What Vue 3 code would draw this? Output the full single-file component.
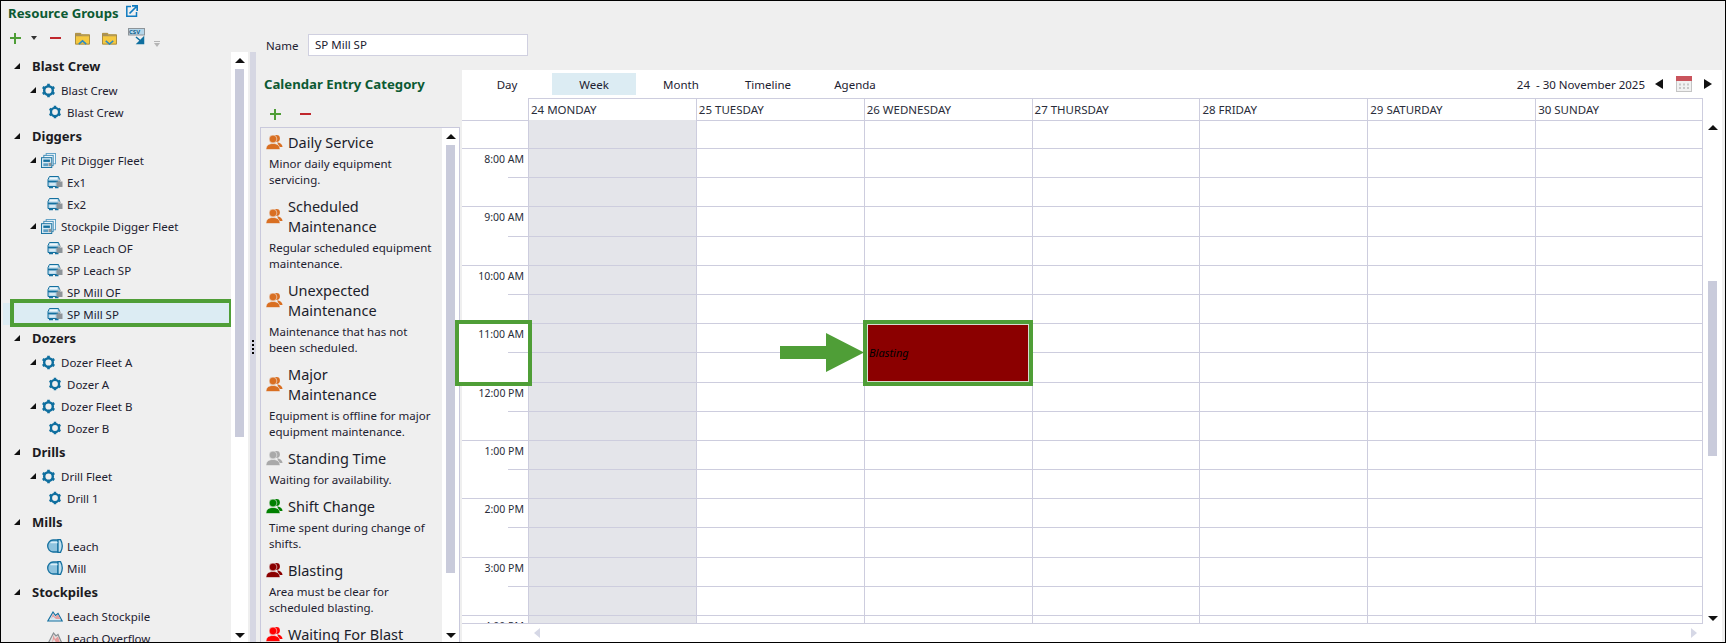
<script setup>
const tree = [
  { t: 'h', n: 'Blast Crew' },
  { t: 'g', n: 'Blast Crew', i: 'gear' },
  { t: 'i', n: 'Blast Crew', i: 'gear' },
  { t: 'h', n: 'Diggers' },
  { t: 'g', n: 'Pit Digger Fleet', i: 'fleet' },
  { t: 'i', n: 'Ex1', i: 'truck' },
  { t: 'i', n: 'Ex2', i: 'truck' },
  { t: 'g', n: 'Stockpile Digger Fleet', i: 'fleet' },
  { t: 'i', n: 'SP Leach OF', i: 'truck' },
  { t: 'i', n: 'SP Leach SP', i: 'truck' },
  { t: 'i', n: 'SP Mill OF', i: 'truck' },
  { t: 'i', n: 'SP Mill SP', i: 'truck', sel: true },
  { t: 'h', n: 'Dozers' },
  { t: 'g', n: 'Dozer Fleet A', i: 'gear' },
  { t: 'i', n: 'Dozer A', i: 'gear' },
  { t: 'g', n: 'Dozer Fleet B', i: 'gear' },
  { t: 'i', n: 'Dozer B', i: 'gear' },
  { t: 'h', n: 'Drills' },
  { t: 'g', n: 'Drill Fleet', i: 'gear' },
  { t: 'i', n: 'Drill 1', i: 'gear' },
  { t: 'h', n: 'Mills' },
  { t: 'i', n: 'Leach', i: 'mill' },
  { t: 'i', n: 'Mill', i: 'mill' },
  { t: 'h', n: 'Stockpiles' },
  { t: 'i', n: 'Leach Stockpile', i: 'pile' },
  { t: 'i', n: 'Leach Overflow', i: 'pile2' }
]

const categories = [
  { c: '#d96f22', title: ['Daily Service'], desc: ['Minor daily equipment', 'servicing.'] },
  { c: '#d96f22', title: ['Scheduled', 'Maintenance'], desc: ['Regular scheduled equipment', 'maintenance.'] },
  { c: '#d96f22', title: ['Unexpected', 'Maintenance'], desc: ['Maintenance that has not', 'been scheduled.'] },
  { c: '#d96f22', title: ['Major', 'Maintenance'], desc: ['Equipment is offline for major', 'equipment maintenance.'] },
  { c: '#a9a9a9', title: ['Standing Time'], desc: ['Waiting for availability.'] },
  { c: '#008000', title: ['Shift Change'], desc: ['Time spent during change of', 'shifts.'] },
  { c: '#8b0000', title: ['Blasting'], desc: ['Area must be clear for', 'scheduled blasting.'] },
  { c: '#ff0000', title: ['Waiting For Blast'], desc: [] }
]

const tabs = ['Day', 'Week', 'Month', 'Timeline', 'Agenda']
const days = ['24 MONDAY', '25 TUESDAY', '26 WEDNESDAY', '27 THURSDAY', '28 FRIDAY', '29 SATURDAY', '30 SUNDAY']
const hours = ['8:00 AM', '9:00 AM', '10:00 AM', '11:00 AM', '12:00 PM', '1:00 PM', '2:00 PM', '3:00 PM']
const dateRange = '24  - 30 November 2025'

const rows = [{ kind: 'first' }]
hours.forEach((h) => {
  rows.push({ kind: 'half', label: h })
  rows.push({ kind: 'hour' })
})
rows.push({ kind: 'last', label: '4:00 PM' })
</script>

<template>
  <div class="screen">
    <svg class="defs" aria-hidden="true">
      <symbol id="gear" viewBox="0 0 16 16">
        <g stroke="#0f6f9f" fill="none">
          <circle cx="8" cy="8" r="4.6" stroke-width="2.6" />
          <path stroke-width="2.8" d="M8 .8v2.6M8 12.6v2.6M1.8 4.4l2.2 1.3M12 10.3l2.2 1.3M1.8 11.6l2.2-1.3M12 5.7l2.2-1.3" />
        </g>
      </symbol>
      <symbol id="truck" viewBox="0 0 16 14">
        <path d="M1 4.500 2.500 1.500h9l1 3v7H1z" fill="#a8cfe4" stroke="#14709f" />
        <rect x="2.500" y="2.500" width="8" height="2" fill="#eef7fb" />
        <path d="M1 6.500h11.500" stroke="#14709f" stroke-width="1.600" />
        <rect x="2.500" y="8" width="6" height="2.500" fill="#d4e8f3" />
        <rect x="9.500" y="6.500" width="6" height="5.500" fill="#8d9499" />
        <rect x="11" y="4.500" width="3" height="2" fill="#b5babd" />
        <path d="M2 12.500h4M8 12.500h3.500" stroke="#14709f" stroke-width="1.600" />
      </symbol>
      <symbol id="fleet" viewBox="0 0 16 16">
        <rect x="5.500" y=".5" width="10" height="11" fill="#eef6fb" stroke="#5d9fc4" />
        <rect x="3" y="2.500" width="10" height="11" fill="#eef6fb" stroke="#3d8ab6" />
        <rect x=".5" y="5" width="11" height="10.500" fill="#d7e9f3" stroke="#14709f" />
        <rect x="2.500" y="7" width="7" height="2.500" fill="#14709f" />
        <rect x="2.500" y="11" width="5" height="3" fill="#5d9fc4" />
        <rect x="8" y="10.500" width="3" height="3.500" fill="#8d9499" />
      </symbol>
      <symbol id="mill" viewBox="0 0 16 14">
        <path d="M11 1H6C3 1 .7 4 .7 7s2.300 6 5.300 6h5z" fill="#8fc3de" stroke="#14709f" stroke-width="1.300" />
        <path d="M11 .7h2.500c1.200 2 1.800 4 1.800 6.300s-.6 4.300-1.800 6.300H11z" fill="#c4e1ef" stroke="#14709f" stroke-width="1.300" />
        <path d="M3.500 3.500h7" stroke="#d9eef8" stroke-width="1.500" />
      </symbol>
      <symbol id="pile" viewBox="0 0 16 12">
        <path d="M.8 11 6 2l2.500 3.500L11 3.500 15.200 11z" fill="#d6e9f3" stroke="#14709f" stroke-width="1.200" />
        <path d="M6 3.500 8 7l3-2.500 2.500 4.500H9L6 6.500 4 9z" fill="#e3a0a0" />
      </symbol>
      <symbol id="pile2" viewBox="0 0 16 14">
        <path d="M.8 13 6.500 2 9 5l2-1.500L15.200 13z" fill="#e2e2e2" stroke="#8a8f93" stroke-width="1.200" />
        <path d="M6.500 4 8 8l3-2.500 2 6H9L7 8 5 12z" fill="#e59a9a" />
      </symbol>
      <symbol id="person" viewBox="0 0 17 16">
        <circle cx="10.500" cy="4.500" r="3.400" />
        <path d="M11 8.500c3 0 5.500 1.800 5.500 4.500H13c-.4-2-1-3.300-2-4.500z" />
        <circle cx="7" cy="5" r="3.900" stroke="#efefef" stroke-width=".6" />
        <path d="M0 15.500c0-3.800 2.500-6 7-6s7 2.200 7 6z" stroke="#efefef" stroke-width=".6" />
      </symbol>
      <symbol id="folder" viewBox="0 0 16 16">
        <path d="M.5 2.500h5.500l1.500 1.500h8V14H.5z" fill="#f6c93f" stroke="#a5873a" />
        <path d="M1 3h4.800l1.500 1.500H15v1H1z" fill="#a8915a" />
      </symbol>
    </svg>

    <aside class="left">
      <header class="title-row">
        <h1 class="section-title">Resource Groups</h1>
        <svg class="ext" viewBox="0 0 12 12" aria-hidden="true">
          <path d="M5 1.500H.8v9.700h9.700V7" fill="none" stroke="#0e7ac0" stroke-width="1.500" />
          <path d="M3.500 8.500 10 2M6 .8h5.200V6" fill="none" stroke="#0e7ac0" stroke-width="1.700" />
        </svg>
      </header>
      <div class="toolbar">
        <span class="plus tb-plus"></span>
        <svg class="tb-drop" viewBox="0 0 6 4" aria-hidden="true"><path d="M0 0h6L3 4z" fill="#333" /></svg>
        <span class="minus tb-minus"></span>
        <span class="tb-folder">
          <svg viewBox="0 0 16 16" aria-hidden="true"><use href="#folder" /><path d="M4 14l4-3.500 4 3.500" fill="none" stroke="#2b8ac4" stroke-width="1.600" /></svg>
        </span>
        <span class="tb-folder second">
          <svg viewBox="0 0 16 16" aria-hidden="true"><use href="#folder" /><path d="M4 10.500l4 3.500 4-3.500" fill="none" stroke="#2b8ac4" stroke-width="1.600" /></svg>
        </span>
        <svg class="tb-csv" viewBox="0 0 17 17" aria-hidden="true">
          <rect x=".5" y=".5" width="16" height="6.500" fill="#b5d6ea" stroke="#8d9499" />
          <path d="M8 9l6 5M15.500 9.500v6h-6z" fill="#0f6f9f" stroke="#0f6f9f" stroke-width="1.500" />
        </svg>
        <span class="csv-label">CSV</span>
        <svg class="tb-more" viewBox="0 0 6 6" aria-hidden="true"><path d="M0 0h6v1H0zM0 2h6L3 6z" fill="#b5b5b5" /></svg>
      </div>
      <div class="tree-wrap">
        <ul class="tree">
          <li v-for="(r, k) in tree" :key="k" class="row" :class="['row-' + r.t, { selected: r.sel }]">
            <svg v-if="r.t !== 'i'" class="caret" viewBox="0 0 7 7" aria-hidden="true"><path d="M7 0v7H0z" fill="#111" /></svg>
            <svg v-if="r.i" class="node-icon" aria-hidden="true"><use :href="'#' + r.i" /></svg>
            <span class="row-text">{{ r.n }}</span>
            <span v-if="r.sel" class="row-mark"></span>
          </li>
        </ul>
        <div class="vscroll tree-scroll">
          <span class="arrow-up"></span>
          <span class="thumb"></span>
          <span class="arrow-down"></span>
        </div>
      </div>
    </aside>

    <div class="splitter"><i></i><i></i><i></i><i></i></div>

    <main class="right">
      <div class="name-row">
        <label class="name-label">Name</label>
        <div class="name-input">SP Mill SP</div>
      </div>
      <div class="body">
        <section class="cats">
          <h2 class="section-title cats-title">Calendar Entry Category</h2>
          <div class="cats-tools">
            <span class="plus"></span>
            <span class="minus"></span>
          </div>
          <div class="cats-box">
            <ul class="cats-list">
              <li v-for="(c, k) in categories" :key="k" class="cat">
                <div class="cat-head">
                  <svg class="person" :style="{ fill: c.c }" aria-hidden="true"><use href="#person" /></svg>
                  <div class="cat-title"><div v-for="l in c.title" :key="l">{{ l }}</div></div>
                </div>
                <div class="cat-desc"><div v-for="l in c.desc" :key="l">{{ l }}</div></div>
              </li>
            </ul>
            <div class="vscroll cat-scroll">
              <span class="arrow-up"></span>
              <span class="thumb"></span>
              <span class="arrow-down"></span>
            </div>
          </div>
        </section>

        <section class="cal">
          <div class="cal-top">
            <button v-for="t in tabs" :key="t" class="tab" :class="{ on: t === 'Week' }">{{ t }}</button>
            <span class="date">{{ dateRange }}</span>
            <svg class="nav nav-prev" viewBox="0 0 8 10" aria-hidden="true"><path d="M8 0v10L0 5z" fill="#111" /></svg>
            <svg class="cal-icon" viewBox="0 0 16 16" aria-hidden="true">
              <rect x=".5" y=".5" width="15" height="15" fill="#f1f1f1" stroke="#c4c4c4" />
              <rect width="16" height="5" fill="#c9545c" />
              <path d="M3 7.500h2v2H3zM7 7.500h2v2H7zM11 7.500h2v2h-2zM3 11h2v2H3zM7 11h2v2H7zM11 11h2v2h-2z" fill="#c8c8c8" />
            </svg>
            <svg class="nav nav-next" viewBox="0 0 8 10" aria-hidden="true"><path d="M0 0v10l8-5z" fill="#111" /></svg>
          </div>

          <div class="cal-main">
            <div class="sched">
              <div class="sched-head">
                <div class="gutter-blank"></div>
                <div v-for="d in days" :key="d" class="day-head">{{ d }}</div>
              </div>
              <div class="sched-body">
                <div v-for="(r, k) in rows" :key="k" class="slot" :class="'slot-' + r.kind">
                  <div class="gutter">{{ r.label }}</div>
                  <div v-for="d in days" :key="d" class="cell" :class="{ shaded: d === days[0] }"></div>
                </div>
              </div>
            </div>
            <div class="vscroll cal-scroll">
              <span class="arrow-up"></span>
              <span class="thumb"></span>
              <span class="arrow-down"></span>
            </div>
          </div>
          <div class="hscroll">
            <svg viewBox="0 0 6 10" aria-hidden="true"><path d="M6 0v10L0 5z" fill="#d6d8e6" /></svg>
            <svg viewBox="0 0 6 10" aria-hidden="true"><path d="M0 0v10l6-5z" fill="#d6d8e6" /></svg>
          </div>
        </section>
      </div>
    </main>

    <!-- items laid over the schedule and the annotation marks of the screenshot -->
    <div class="event"><span class="event-inner">Blasting</span></div>
    <div class="time-mark"></div>
    <svg class="pointer" viewBox="0 0 84 40" aria-hidden="true">
      <path d="M0 13h46V0l38 19.500L46 39V26H0z" fill="#4f9e37" />
    </svg>
  </div>
</template>

<style>
html, body { margin: 0; padding: 0; background: #efefef; }
</style>

<style scoped>
* { box-sizing: border-box; }
.defs { display: none; }
ul { list-style: none; margin: 0; padding: 0; }

.screen {
  position: relative;
  width: 1726px;
  height: 643px;
  overflow: hidden;
  display: flex;
  background: #efefef;
  border: 1px solid #000;
  font-family: "Noto Sans", "Open Sans", sans-serif;
  font-size: 11.5px;
  color: #1d2130;
}

/* left */
.left { width: 249px; display: flex; flex-direction: column; flex: none; }
.title-row { height: 23px; display: flex; align-items: center; padding-left: 7px; gap: 7px; }
.section-title {
  margin: 0;
  font-size: 13.2px;
  font-weight: 700;
  color: #0c5a33;
  white-space: nowrap;
}
.ext { width: 12px; height: 12px; margin-top: -3px; }
.toolbar { height: 28px; display: flex; align-items: center; position: relative; padding-left: 9px; }
.plus, .minus { display: block; position: relative; width: 11px; height: 11px; flex: none; }
.plus { background: linear-gradient(#4f9e37, #4f9e37) center/100% 2.400px no-repeat, linear-gradient(#4f9e37, #4f9e37) center/2.400px 100% no-repeat; }
.minus { background: linear-gradient(#c0272d, #c0272d) center/100% 2.400px no-repeat; }
.tb-drop { width: 6px; height: 4px; margin-left: 10px; }
.tb-minus { margin-left: 13px; }
.tb-folder { width: 15px; height: 15px; margin-left: 14px; display: block; }
.tb-folder svg { width: 15px; height: 15px; display: block; }
.tb-folder.second { margin-left: 12px; }
.tb-csv { width: 17px; height: 17px; margin-left: 11px; margin-top: -3px; }
.csv-label { position: absolute; left: 128px; top: 5px; font-size: 6px; font-weight: 700; color: #0f5f8a; line-height: 7px; }
.tb-more { width: 6px; height: 6px; margin-left: 9px; margin-top: 12px; }

.tree-wrap { flex: 1; min-height: 0; display: flex; overflow: hidden; }
.tree { width: 230px; flex: none; padding-top: 1px; }
.vscroll { display: flex; flex-direction: column; align-items: center; background: #fff; position: relative; }
.tree-scroll { width: 17px; margin-right: 2px; }
.arrow-up, .arrow-down { display: block; width: 0; height: 0; border-left: 5px solid transparent; border-right: 5px solid transparent; flex: none; }
.arrow-up { border-bottom: 5px solid #111; margin-top: 6px; }
.arrow-down { border-top: 5px solid #111; margin-top: auto; margin-bottom: 4px; }
.thumb { display: block; width: 9px; background: #c9cbdb; flex: none; }
.tree-scroll .thumb { height: 368px; margin-top: 6px; }

.row { display: flex; align-items: center; position: relative; white-space: nowrap; height: 22px; }
.row-h { height: 26px; padding: 0 0 1px 13px; font-size: 13px; font-weight: 700; color: #1b1b22; }
.row-h .caret { width: 6px; height: 6px; margin-right: 12px; }
.row-g { padding-left: 29px; }
.row-g .caret { width: 6px; height: 6px; margin-right: 5px; }
.row-i { padding-left: 46px; }
.node-icon { width: 16px; height: 14px; margin-right: 4px; flex: none; }
.row-g .node-icon { width: 15px; height: 15px; margin-right: 5px; }
.selected { background: #dcecf3; margin-left: 2px; padding-left: 44px; }
.row-mark { position: absolute; left: 7px; right: -2px; top: -4px; bottom: -2px; border: 4px solid #4f9e37; }

.splitter {
  width: 6px;
  margin-top: 51px;
  flex: none;
  background: #d6d7e3;
  display: flex;
  flex-direction: column;
  align-items: center;
  justify-content: center;
  gap: 2px;
}
.splitter i { display: block; width: 2px; height: 2px; background: #000; }

/* right */
.right { flex: 1; min-width: 0; display: flex; flex-direction: column; }
.name-row { height: 69px; flex: none; display: flex; padding: 33px 0 0 10px; }
.name-label { width: 42px; line-height: 23px; }
.name-input { width: 220px; height: 22px; background: #fff; border: 1px solid #d0d0e0; padding-left: 6px; line-height: 20px; }
.body { flex: 1; min-height: 0; display: flex; }

.cats { width: 206px; flex: none; display: flex; flex-direction: column; padding-left: 4px; }
.cats-title { height: 28px; line-height: 28px; padding-left: 4px; }
.cats-tools { height: 29px; display: flex; align-items: center; padding: 3px 0 0 10px; gap: 19px; }
.cats-box { width: 200px; flex: 1; min-height: 0; border: 1px solid #c9c9dc; border-bottom: 0; display: flex; overflow: hidden; }
.cats-list { flex: 1; min-width: 0; padding-top: 4px; overflow: hidden; }
.cat { margin-bottom: 8px; white-space: nowrap; }
.cat-head { display: flex; align-items: center; padding-left: 5px; }
.person { width: 17px; height: 16px; flex: none; margin-right: 5px; }
.cat-title { font-size: 14.5px; line-height: 20px; color: #1b1d2b; }
.cat-desc { padding: 4px 0 0 8px; line-height: 16px; }
.cat-scroll { width: 17px; flex: none; }
.cat-scroll .thumb { height: 428px; margin-top: 6px; }

.cal { flex: 1; min-width: 0; background: #fff; margin-right: 3px; display: flex; flex-direction: column; }
.cal-top { height: 28px; flex: none; display: flex; align-items: flex-start; gap: 3px; padding: 3px 0 0 3px; }
.tab { width: 84px; height: 22px; padding: 1px 0 0; border: 0; background: transparent; font: inherit; color: inherit; }
.tab.on { background: #dcecf3; }
.date { margin-left: auto; white-space: pre; line-height: 24px; font-size: 11.5px; }
.nav { width: 8px; height: 10px; margin-top: 6px; }
.nav-prev { margin-left: 7px; }
.cal-icon { width: 16px; height: 16px; margin: 3px 9px 0 10px; }
.nav-next { margin-right: 10px; }

.cal-main { flex: 1; min-height: 0; display: flex; }
.sched { width: 1241px; flex: none; display: flex; flex-direction: column; }
.sched-head, .slot { display: grid; grid-template-columns: 66px repeat(7, 1fr); }
.sched-head { height: 22px; flex: none; }
.gutter-blank { border-bottom: 1px solid #cdcdde; }
.day-head {
  border-top: 1px solid #cdcdde;
  border-bottom: 1px solid #cdcdde;
  border-left: 1px solid #cdcdde;
  padding: 1px 0 0 2px;
  line-height: 20px;
  white-space: nowrap;
  color: #2a2d3a;
}
.day-head:last-child { border-right: 1px solid #cdcdde; }
.sched-body { flex: 1; min-height: 0; overflow: hidden; border-bottom: 1px solid #cdcdde; }
.slot { height: 29.2px; }
.slot-first { height: 29px; }
.slot-last { height: 9px; overflow: hidden; }
.gutter { text-align: right; padding: 2px 4px 0 0; line-height: 16px; font-size: 10.5px; white-space: nowrap; overflow: hidden; color: #2a2d3a; }
.cell { border-left: 1px solid #cdcdde; border-bottom: 1px solid #cdcdde; }
.cell:last-child { border-right: 1px solid #cdcdde; }
.slot-last .cell { border-bottom: 0; }
.shaded { background-color: #e4e5ea; }
.slot-first .gutter, .slot-hour .gutter { border-bottom: 1px solid #cdcdde; }
.slot-half .gutter { background: linear-gradient(#cdcdde, #cdcdde) right bottom/20px 1px no-repeat; }

.cal-scroll { flex: 1; }
.cal-scroll .arrow-up { margin-top: 27px; }
.cal-scroll .thumb { height: 175px; margin-top: 151px; }
.cal-scroll .arrow-down { margin-bottom: 3px; }
.hscroll { height: 18px; flex: none; display: flex; justify-content: space-between; align-items: center; padding: 0 25px 0 72px; }
.hscroll svg { width: 6px; height: 10px; }

/* overlays */
.event {
  position: absolute;
  left: 862px;
  top: 319px;
  width: 170px;
  height: 66px;
  border: 4px solid #4f9e37;
  background: #8b0000;
  box-shadow: inset 0 0 0 1px #d5dccf;
  display: flex;
  align-items: center;
}
.event-inner { font-style: italic; font-size: 11px; color: #000; padding: 0 0 2px 2px; }
.time-mark {
  position: absolute;
  left: 454px;
  top: 319px;
  width: 77px;
  height: 66px;
  border: 4px solid #4f9e37;
  background: linear-gradient(#fff, #fff) left/4px 100% no-repeat;
}
.pointer { position: absolute; left: 779px; top: 332px; width: 84px; height: 40px; }
</style>
